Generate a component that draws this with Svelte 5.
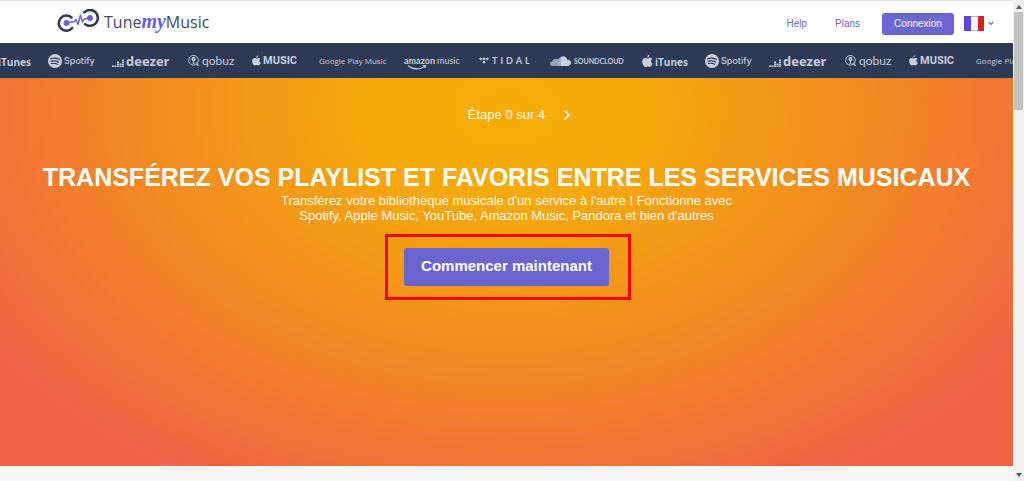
<script lang="ts">
	type Service = { id: string; name: string };

	const services: Service[] = [
		{ id: 'itunes', name: 'iTunes' },
		{ id: 'spotify', name: 'Spotify' },
		{ id: 'deezer', name: 'deezer' },
		{ id: 'qobuz', name: 'qobuz' },
		{ id: 'apple', name: 'MUSIC' },
		{ id: 'google', name: 'Google Play Music' },
		{ id: 'amazon', name: 'amazon' },
		{ id: 'tidal', name: 'TIDAL' },
		{ id: 'soundcloud', name: 'SOUNDCLOUD' }
	];

	const strip = [...services, ...services];

	let step = $state(0);
	const totalSteps = 4;

	function nextStep() {
		if (step < totalSteps) step += 1;
	}
</script>

<div class="window">
	<div class="page">
		<header class="topbar">
			<a class="brand" href="/" aria-label="Tune my Music">
				<svg class="brand-mark" width="43" height="24" viewBox="0 0 43 24" fill="none" aria-hidden="true">
					<path d="M14.600 8.600A7.600 7.600 0 1 0 15.200 19" stroke="#343a52" stroke-width="2.600" stroke-linecap="round" />
					<path d="M27.400 3.300A7.900 7.900 0 1 1 28.200 15.200" stroke="#343a52" stroke-width="2.600" stroke-linecap="round" />
					<circle cx="9.500" cy="14" r="2.900" fill="#6a5fd8" />
					<circle cx="33" cy="9" r="2.900" fill="#6a5fd8" />
					<path d="M9.500 14l8-1.500 1.500-2 2 5 2.500-9.500 2 7 1.500-3L33 9" stroke="#6a5fd8" stroke-width="1.400" stroke-linejoin="round" />
				</svg>
				<span class="brand-name">Tune<em>my</em>Music</span>
			</a>
			<nav class="menu">
				<a class="menu-link" href="/help">Help</a>
				<a class="menu-link" href="/plans">Plans</a>
				<button class="login" type="button">Connexion</button>
				<button class="language" type="button" aria-label="Français">
					<svg width="20" height="15" viewBox="0 0 20 15" aria-hidden="true">
						<rect width="20" height="15" fill="#f5f3fa" />
						<rect width="7" height="15" fill="#5b46e2" />
						<rect x="14" width="6" height="15" fill="#e0201c" />
						<path d="M0 .5h20M0 14.500h20" stroke="#55506a" stroke-opacity=".35" />
					</svg>
					<svg width="6" height="5" viewBox="0 0 6 5" fill="none" aria-hidden="true">
						<path d="M.8 1 3 3.300 5.200 1" stroke="#6a64a8" stroke-width="1.200" />
					</svg>
				</button>
			</nav>
		</header>

		<div class="services">
			<ul class="track">
				{#each strip as service}
					<li class="service {service.id}">
						{#if service.id === 'itunes' || service.id === 'apple'}
							<svg class="icon" viewBox="0 0 16 18" aria-hidden="true">
								<path d="M10.800 0c.2 2-1.400 4-3.200 4C7.300 2.200 9 .2 10.800 0zM15 6.200c-2.800 1.600-2.300 5.400.6 6.600-.7 2-2.200 4.900-4 5-1.300 0-1.900-.8-3.300-.8s-2 .8-3.300.8C2.500 17.800.3 13.200.3 9.900c0-3.500 2.100-5.400 4.300-5.400 1.500 0 2.600.9 3.600.9.900 0 2.300-1 4.100-1 1.200 0 2.200.7 2.700 1.800z" />
							</svg>
						{:else if service.id === 'spotify'}
							<svg class="icon" viewBox="0 0 14 14" aria-hidden="true">
								<circle cx="7" cy="7" r="7" />
								<path d="M2.600 4.700c3-.9 6.300-.6 8.900.8M3 7.200c2.600-.7 5.300-.4 7.600.9M3.400 9.500c2.200-.5 4.300-.3 6.200.8" fill="none" stroke="#2d3a55" stroke-width="1.200" stroke-linecap="round" />
							</svg>
						{:else if service.id === 'deezer'}
							<svg class="icon" viewBox="0 0 12 8" aria-hidden="true">
								<path d="M0 6.500h2V8H0zM2.500 6.500h2V8h-2zM5 6.500h2V8H5zM7.500 6.500h2V8h-2zM10 6.500h2V8h-2zM5 4.500h2V6H5zM7.500 4.500h2V6h-2zM10 4.500h2V6h-2zM5 2.500h2V4H5zM10 2.500h2V4h-2zM10 .5h2V2h-2z" />
							</svg>
						{:else if service.id === 'qobuz'}
							<svg class="icon" viewBox="0 0 11 11" fill="none" stroke="#c8cede" aria-hidden="true">
								<circle cx="5.500" cy="5.300" r="4.800" stroke-width="1" />
								<circle cx="5.500" cy="4" r="1.300" stroke-width="1.500" />
								<path d="M5.500 5v4M8 8l2.500 2.800" stroke-width="1.300" />
							</svg>
						{:else if service.id === 'tidal'}
							<svg class="icon" viewBox="0 0 12 8" aria-hidden="true">
								<path d="M2 0l2 2-2 2-2-2zM6 0l2 2-2 2-2-2zM10 0l2 2-2 2-2-2zM6 4l2 2-2 2-2-2z" />
							</svg>
						{:else if service.id === 'soundcloud'}
							<svg class="icon" viewBox="0 0 23 11" aria-hidden="true">
								<path d="M0 8.500C0 7 1 6 2.500 6 3 3.500 6 2.200 8.500 3.500L10 2.500V11H2.500C1 11 0 10 0 8.500z" opacity=".7" />
								<path d="M10 2.500 12 1v10h-2z" opacity=".85" />
								<path d="M12 1C15-.9 18.500 1 19 4.300c2-.5 4 1 4 3.200 0 2-1.600 3.500-3.500 3.500H12z" />
							</svg>
						{/if}
						<span class="service-name">{service.name}</span>
						{#if service.id === 'amazon'}
							<span class="amazon-music">music</span>
							<svg class="smile" viewBox="0 0 20 5" fill="none" aria-hidden="true">
								<path d="M1 .8c5 4 12 4 16.500.8M15.500.8l3-.3-.6 2.600" stroke="#c8cede" stroke-width="1.100" />
							</svg>
						{/if}
					</li>
				{/each}
			</ul>
		</div>

		<main class="hero">
			<div class="steps">
				<span class="steps-label">Étape {step} sur {totalSteps}</span>
				<button class="next" type="button" aria-label="Étape suivante" onclick={nextStep}>
					<svg width="8" height="12" viewBox="0 0 8 12" fill="none" aria-hidden="true">
						<path d="M1.500 1.500 6 6 1.500 10.500" stroke="#fff1cf" stroke-width="1.800" />
					</svg>
				</button>
			</div>
			<h1>TRANSFÉREZ VOS PLAYLIST ET FAVORIS ENTRE LES SERVICES MUSICAUX</h1>
			<p class="intro">
				Transférez votre bibliothèque musicale d'un service à l'autre ! Fonctionne avec Spotify, Apple
				Music, YouTube, Amazon Music, Pandora et bien d'autres
			</p>
			<div class="highlight">
				<button class="start" type="button">Commencer maintenant</button>
			</div>
		</main>
	</div>

	<div class="scrollbar" aria-hidden="true">
		<svg width="6" height="4" viewBox="0 0 6 4"><path d="M0 4 3 0l3 4z" fill="#555" /></svg>
		<div class="thumb"></div>
		<svg width="6" height="4" viewBox="0 0 6 4"><path d="M0 0h6L3 4z" fill="#555" /></svg>
	</div>
</div>

<style>
	:global(body) {
		margin: 0;
		background: #f7f7f7;
		font-family: 'Liberation Sans', Arial, sans-serif;
	}

	button {
		border: 0;
		padding: 0;
		background: none;
		font-family: inherit;
		cursor: pointer;
	}

	svg {
		display: block;
		flex: none;
	}

	.window {
		display: grid;
		grid-template-columns: minmax(0, 1fr) 11px;
		min-height: 100vh;
	}

	/* Header */
	.topbar {
		display: flex;
		justify-content: space-between;
		align-items: center;
		box-sizing: border-box;
		height: 43px;
		padding: 3px 19px 0 57px;
		border-top: 1px solid #dedede;
		background: #fff;
	}

	.brand {
		display: flex;
		align-items: center;
		gap: 4px;
		text-decoration: none;
	}

	.brand-mark {
		margin-bottom: 6px;
	}

	.brand-name {
		padding-bottom: 4px;
		font-family: 'Open Sans', 'Noto Sans', sans-serif;
		font-size: 16px;
		line-height: 24px;
		color: #454a5e;
	}

	.brand-name em {
		font-family: 'Liberation Serif', serif;
		font-size: 20px;
		font-weight: 700;
		line-height: 20px;
		color: #6a5fd8;
	}

	.menu {
		display: flex;
		align-items: center;
		gap: 28px;
	}

	.menu-link {
		font-size: 10px;
		color: #6e66c4;
		text-decoration: none;
	}

	.login {
		width: 72px;
		height: 22px;
		margin-left: -6px;
		border-radius: 3px;
		background: #6a65cf;
		font-size: 10px;
		color: #fff;
	}

	.language {
		display: flex;
		align-items: center;
		gap: 4px;
		margin-left: -18px;
	}

	/* Services strip */
	.services {
		overflow: hidden;
		height: 35px;
		background: #2d3a55;
	}

	.track {
		display: flex;
		align-items: center;
		gap: 18px;
		height: 35px;
		margin: 0 0 0 -15px;
		padding: 0;
		list-style: none;
	}

	.service {
		position: relative;
		display: flex;
		flex: none;
		align-items: center;
		gap: 2px;
		font-family: Lato, sans-serif;
		font-size: 11px;
		line-height: 16px;
		white-space: nowrap;
		color: #c8cede;
		fill: #c8cede;
	}

	.itunes {
		width: 45px;
		font-family: 'Open Sans', sans-serif;
		font-weight: 700;
	}

	.itunes .icon {
		width: 11px;
		height: 14px;
	}

	.itunes .service-name {
		padding-top: 3px;
		font-size: 10px;
	}

	.spotify {
		width: 46px;
		font-family: Inter, sans-serif;
		font-weight: 500;
	}

	.spotify .icon {
		width: 14px;
		height: 14px;
	}

	.spotify .service-name {
		font-size: 9px;
	}

	.deezer {
		width: 58px;
		font-family: 'Open Sans', sans-serif;
		font-weight: 700;
	}

	.deezer .icon {
		width: 12px;
		height: 8px;
		margin-top: 4px;
	}

	.deezer .service-name {
		font-size: 13px;
		line-height: 20px;
	}

	.qobuz {
		width: 46px;
		gap: 3px;
	}

	.qobuz .icon {
		width: 11px;
		height: 11px;
	}

	.qobuz .service-name {
		font-size: 12px;
	}

	.apple {
		width: 49px;
		font-family: Roboto, sans-serif;
		font-weight: 700;
	}

	.apple .icon {
		width: 9px;
		height: 11px;
	}

	.google {
		width: 67px;
		font-family: 'Open Sans', sans-serif;
	}

	.google .service-name {
		font-size: 8px;
	}

	.amazon {
		width: 57px;
	}

	.amazon .service-name {
		font-size: 9px;
		font-weight: 700;
	}

	.amazon .amazon-music {
		font-size: 9px;
	}

	/* Arrow drawn under the amazon word */
	.smile {
		position: absolute;
		top: 12px;
		left: 3px;
		width: 20px;
		height: 5px;
	}

	.tidal {
		width: 52px;
		gap: 3px;
		font-weight: 700;
	}

	.tidal .icon {
		width: 10px;
		height: 7px;
	}

	.tidal .service-name {
		font-size: 9px;
		letter-spacing: 3px;
	}

	.soundcloud {
		width: 75px;
		font-weight: 700;
	}

	.soundcloud .icon {
		width: 23px;
		height: 10px;
	}

	.soundcloud .service-name {
		font-size: 7px;
	}

	/* Hero */
	.hero {
		box-sizing: border-box;
		min-height: 388px;
		padding: 29px 20px 180px;
		background: radial-gradient(ellipse 620px 425px at 50% 8%, #f5ac07 0%, #f5a90b 22%, #f28328 67%, #f06347 100%);
		color: #fff;
		text-align: center;
	}

	.steps {
		display: grid;
		grid-template-columns: 1fr auto 1fr;
		align-items: center;
		column-gap: 18px;
		font-size: 13px;
		line-height: 16px;
	}

	.steps-label {
		grid-column: 2;
		color: #fff8e4;
	}

	.next {
		justify-self: start;
	}

	h1 {
		margin: 38px 0 0;
		font-size: 25px;
		line-height: 32px;
		white-space: nowrap;
	}

	.intro {
		max-width: 480px;
		margin: 0 auto;
		font-size: 13px;
		line-height: 15px;
		color: #fff8e8;
	}

	.highlight {
		position: relative;
		display: inline-block;
		margin-top: 25px;
	}

	/* Red frame around the call to action */
	.highlight::after {
		content: '';
		position: absolute;
		inset: -14px -22px -14px -19px;
		border: 3px solid #f00;
		pointer-events: none;
	}

	.start {
		display: block;
		width: 205px;
		height: 38px;
		padding-bottom: 4px;
		border-radius: 3px;
		background: #6a65cf;
		font-size: 15px;
		font-weight: 700;
		color: #fff;
	}

	/* Scrollbar */
	.scrollbar {
		display: flex;
		flex-direction: column;
		align-items: center;
		box-sizing: border-box;
		padding: 5px 0 4px;
		background: #f1f1f1;
	}

	.thumb {
		width: 9px;
		height: 98px;
		margin: 3px 0 auto;
		background: #c1c1c1;
	}
</style>
